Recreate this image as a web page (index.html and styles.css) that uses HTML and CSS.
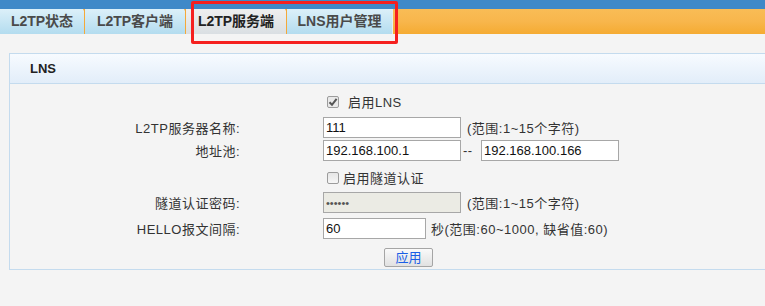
FILE: index.html
```html
<!DOCTYPE html>
<html>
<head>
	<title>L2TP服务端</title>
	<meta charset="utf-8">
	<link rel="stylesheet" href="styles.css">
</head>
<body>
	<div class="topbar"></div>
	<div class="tabbar">
		<div class="tab t1">L2TP状态</div>
		<div class="tab t2">L2TP客户端</div>
		<div class="tab t3 active">L2TP服务端</div>
		<div class="tab t4">LNS用户管理</div>
		<div class="tab-fill"></div>
	</div>
	<div class="mark"></div>

	<div class="main">
		<div class="panel">
			<div class="panel-hd">LNS</div>
			<div class="panel-bd">
				<div class="row r1">
					<span class="cb on"><svg width="10" height="10" viewBox="0 0 10 10"><path d="M1.5 5.2 L4 7.8 L8.6 1.8" fill="none" stroke="#555" stroke-width="2"/></svg></span>
					<span class="cb-txt gap10">启用LNS</span>
				</div>
				<div class="row r2">
					<span class="lbl">L2TP服务器名称:</span>
					<input class="ipt" type="text" value="111">
					<span class="hint">(范围:1~15个字符)</span>
				</div>
				<div class="row r3">
					<span class="lbl">地址池:</span>
					<input class="ipt" type="text" value="192.168.100.1">
					<span class="dash">--</span>
					<input class="ipt" type="text" value="192.168.100.166">
				</div>
				<div class="row r4">
					<span class="cb"></span>
					<span class="cb-txt gap5">启用隧道认证</span>
				</div>
				<div class="row r5">
					<span class="lbl">隧道认证密码:</span>
					<input class="ipt" type="password" value="123456" disabled>
					<span class="hint">(范围:1~15个字符)</span>
				</div>
				<div class="row r6">
					<span class="lbl">HELLO报文间隔:</span>
					<input class="ipt short" type="text" value="60">
					<span class="hint2">秒(范围:60~1000, 缺省值:60)</span>
				</div>
				<div class="btn-row">
					<button class="btn">应用</button>
				</div>
			</div>
		</div>
	</div>
</body>
</html>
```

FILE: styles.css
```css
html, body{
	margin: 0;
	padding: 0;
	background: #f4f4f4;
	overflow: hidden;
	font-family: "Liberation Sans", "Noto Sans CJK SC", sans-serif;
	font-size: 13px;
	color: #333;
}
.topbar{
	height: 9px;
	background: #3f89c8;
}
.tabbar{
	display: flex;
	height: 25px;
}
.tab{
	position: relative;
	height: 25px;
	line-height: 25px;
	text-align: center;
	font-size: 14px;
	font-weight: bold;
	color: #4a4a4a;
	background: linear-gradient(#dcf0f9, #b3dcef);
	border-right: 1px solid #f4a93a;
}
/* little orange notch on top of every separator */
.tab::after{
	content: "";
	position: absolute;
	top: 0;
	right: -3px;
	border-left: 2px solid transparent;
	border-right: 2px solid transparent;
	border-top: 4px solid #f4a93a;
}
.t1{ width: 84px; }
.t2{ width: 100px; }
.t3{ width: 100px; }
.t4{ width: 105px; border-right: 1px solid #e6eef2; }
.t4::after{ display: none; }
.tab.active{
	background: linear-gradient(#efefef, #dadfe3);
	color: #222;
}
.tab-fill{
	flex: 1;
	background: linear-gradient(#f9bc56 0%, #f8b64c 50%, #f5ab32 100%);
}
/* red annotation frame over the tabs */
.mark{
	position: absolute;
	left: 191px;
	top: 1px;
	width: 201px;
	height: 37px;
	border: 3px solid #f5201f;
	border-radius: 2px;
}
.main{
	padding: 19px 0 0 9px;
}
/* panel runs off the right edge, so no right border is seen */
.panel{
	border: 1px solid #c4dbee;
	border-right: 0;
}
.panel-hd{
	height: 29px;
	line-height: 29px;
	padding-left: 20px;
	font-weight: bold;
	color: #222;
	background: linear-gradient(#f7fbff, #e2edf9);
	border-bottom: 1px solid #c4dbee;
}
.panel-bd{
	padding: 6px 0 2px 0;
	letter-spacing: 0.5px;
}
.row{
	display: flex;
	align-items: center;
	height: 23px;
}
.r2{ margin-top: 3px; }
.r4{ margin-top: 4px; }
.r5{ margin-top: 2px; }
.r6{ margin-top: 3px; }
.lbl{
	width: 230px;
	margin-right: 83px;
	text-align: right;
}
.r1, .r4{
	padding-left: 317px;
}
.cb{
	display: inline-flex;
	align-items: center;
	justify-content: center;
	box-sizing: border-box;
	width: 12px;
	height: 12px;
	border: 1px solid #9c9c9c;
	border-radius: 2px;
	background: linear-gradient(#e6e6e6, #f6f6f6);
}
.cb.on{
	background: #e9e9e9;
}
.gap10{ margin-left: 9px; }
.gap5{ margin-left: 4px; }
.ipt{
	box-sizing: border-box;
	width: 138px;
	height: 21px;
	margin: 0;
	padding: 0 2px;
	border: 1px solid #a7a7a7;
	background: #fff;
	font-family: "Liberation Sans", "Noto Sans CJK SC", sans-serif;
	font-size: 13px;
	color: #111;
	outline: none;
}
.ipt:disabled{
	background: #ebebe4;
	color: #555;
	font-size: 11px;
	letter-spacing: 0;
}
.ipt.short{
	width: 103px;
}
.hint{
	margin-left: 6px;
}
.hint2{
	margin-left: 5px;
}
.dash{
	width: 20px;
	padding-left: 2px;
	box-sizing: border-box;
}
.btn-row{
	margin-top: 8px;
	padding-left: 374px;
	height: 19px;
}
.btn{
	display: block;
	box-sizing: border-box;
	width: 49px;
	height: 19px;
	margin: 0;
	padding: 0;
	border: 1px solid #a5a5a5;
	border-radius: 2px;
	background: linear-gradient(#fafafa, #e1e1e1);
	font-family: "Liberation Sans", "Noto Sans CJK SC", sans-serif;
	font-size: 13px;
	line-height: 17px;
	color: #1a5fe6;
}
```
